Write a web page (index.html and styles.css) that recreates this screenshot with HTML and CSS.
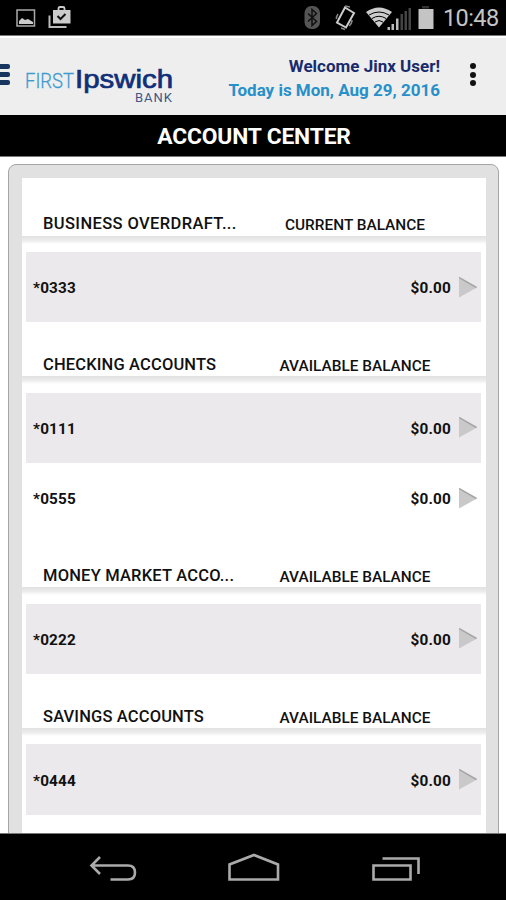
FILE: index.html
```
<!DOCTYPE html>
<html lang="en">
<head>
    <meta charset="UTF-8">
    <title>Account Center</title>
    <link rel="stylesheet" href="styles.css">
</head>
<body>
<div class="screen">
    <div class="status">
        <svg width="90" height="35">
            <path d="M17 10h17.500v16h-17.500z" fill="none" stroke="#aaa" stroke-width="1.500"/>
            <path d="M19 24v-3l3-3 3 2 3-1 5 3v2z" fill="#ccc"/>
            <path d="M49.500 15.500v11.500h17" fill="none" stroke="#bbb" stroke-width="2"/>
            <path d="M53 10h17.500v13.500h-17.500z" fill="#ccc"/>
            <path d="M58.500 10v-1.500q0-1.500 1.500-1.500h3q1.500 0 1.500 1.500v1.500" fill="none" stroke="#ccc" stroke-width="1.800"/>
            <path d="M57.500 16l3 3 5-5" fill="none" stroke="#111" stroke-width="2"/>
        </svg>
        <svg class="signals" width="136" height="35">
            <rect x="4.500" y="6" width="15.500" height="23" rx="7" fill="#555"/>
            <path d="M8 13.500l8.500 8-4.500 4v-16l4.500 4-8.500 8" fill="none" stroke="#111" stroke-width="1.500"/>
            <path d="M45 7.500l9 5.500-8 14.500-9-5z" fill="none" stroke="#ccc" stroke-width="2"/>
            <path d="M38 14q-2 3-1.500 5M41 28l4 1.500M49 26q3-2 3-6M45 6l5 1" fill="none" stroke="#888" stroke-width="1.500"/>
            <path d="M66 12q13-9 26 0l-13 15.500z" fill="#ccc"/>
            <path d="M69 15q10-6 20 0M72 18.500q7-4.500 14 0M75 22q4-3 8 0" fill="none" stroke="#000" stroke-width="1"/>
            <path d="M87.500 30v-3h2.500v3zM91.500 30v-6h2.500v6zM96 30v-11.500h2.500v11.500z" fill="#bbb"/>
            <path d="M100.500 30v-16h2.500v16zM104.500 30v-19h2.500v19zM108.500 30v-22h2.500v22z" fill="#444"/>
            <path d="M118.500 9h15v20h-15z" fill="#c4c4c4"/>
            <path d="M122 6h7v2.500h-7z" fill="#333"/>
        </svg>
        <span class="clock">10:48</span>
    </div>

    <div class="top">
        <div class="menu"><i></i><i></i><i></i></div>
        <svg class="logo" width="150" height="60">
            <text class="first" x="0" y="37.500" textLength="49" lengthAdjust="spacingAndGlyphs">FIRST</text>
            <text class="ipswich" x="50" y="37.500" textLength="98" lengthAdjust="spacingAndGlyphs">Ipswich</text>
            <text class="bank" x="110" y="52" textLength="37">BANK</text>
        </svg>
        <div class="welcome">
            <p class="user">Welcome Jinx User!</p>
            <p class="today">Today is Mon, Aug 29, 2016</p>
        </div>
        <div class="dots"><i></i><i></i><i></i></div>
    </div>

    <h1>ACCOUNT CENTER</h1>

    <div class="content">
        <div class="panel">
            <div class="list">
                <div class="head first-head"><span class="name">BUSINESS OVERDRAFT...</span><span class="balance">CURRENT BALANCE</span></div>
                <div class="row gray"><span>*0333</span><span class="money">$0.00</span><svg class="arrow" width="18" height="21"><path d="M0 0l18 10.500-18 10z"/><path class="edge" d="M0 .5l17.500 10"/></svg></div>
                <div class="head"><span class="name">CHECKING ACCOUNTS</span><span class="balance">AVAILABLE BALANCE</span></div>
                <div class="row gray"><span>*0111</span><span class="money">$0.00</span><svg class="arrow" width="18" height="21"><path d="M0 0l18 10.500-18 10z"/><path class="edge" d="M0 .5l17.500 10"/></svg></div>
                <div class="row"><span>*0555</span><span class="money">$0.00</span><svg class="arrow" width="18" height="21"><path d="M0 0l18 10.500-18 10z"/><path class="edge" d="M0 .5l17.500 10"/></svg></div>
                <div class="head"><span class="name money-market">MONEY MARKET ACCO...</span><span class="balance">AVAILABLE BALANCE</span></div>
                <div class="row gray"><span>*0222</span><span class="money">$0.00</span><svg class="arrow" width="18" height="21"><path d="M0 0l18 10.500-18 10z"/><path class="edge" d="M0 .5l17.500 10"/></svg></div>
                <div class="head"><span class="name">SAVINGS ACCOUNTS</span><span class="balance">AVAILABLE BALANCE</span></div>
                <div class="row gray"><span>*0444</span><span class="money">$0.00</span><svg class="arrow" width="18" height="21"><path d="M0 0l18 10.500-18 10z"/><path class="edge" d="M0 .5l17.500 10"/></svg></div>
            </div>
        </div>
    </div>

    <div class="nav">
        <svg width="506" height="67" fill="none" stroke="#aaa" stroke-width="2.600">
            <path d="M100 23l-8.500 8.500 8.500 8.500M92 31.500h36q7 0 7 7t-7 7h-17.500"/>
            <path d="M229.500 45.500v-15l24.500-9.500 24 9.500v15z"/>
            <path d="M373.500 31.500h37v14h-37zM382.500 24.500h36v15.500"/>
        </svg>
    </div>
</div>
</body>
</html>
```
FILE: styles.css
```
*{
    margin: 0;
    padding: 0;
    box-sizing: border-box;
}
body{
    font-family: Roboto, "Liberation Sans", sans-serif;
    background: #fff;
    color: #111;
}
svg{
    display: block;
}
.screen{
    width: 506px;
    height: 900px;
    overflow: hidden;
    display: flex;
    flex-direction: column;
}
.status{
    height: 36px;
    flex: none;
    display: flex;
    background: #000;
    border-bottom: 1px solid #777;
}
.signals{
    margin-left: 210px;
}
.clock{
    margin-left: 7px;
    color: #c4c4c4;
    font-size: 23.5px;
    line-height: 37px;
    letter-spacing: -.6px;
}
.top{
    height: 79px;
    flex: none;
    display: flex;
    background: #eee;
    border-top: 2px solid #fff;
}
.menu{
    width: 10px;
    padding-top: 26px;
}
.menu i{
    display: block;
    height: 5px;
    margin-bottom: 3px;
    background: #17365f;
    border-radius: 0 2px 2px 0;
}
.logo{
    margin: 12px 0 0 15px;
}
.first{
    font: 300 20.5px Roboto, sans-serif;
    fill: #3d9bd0;
    stroke: #3d9bd0;
    stroke-width: .3px;
}
.ipswich{
    font: 500 25px "Liberation Sans", sans-serif;
    fill: #102f78;
    stroke: #102f78;
    stroke-width: .7px;
}
.bank{
    font: 13px Roboto, sans-serif;
    fill: #3d5688;
}
.welcome{
    width: 265px;
    padding-top: 17px;
    text-align: right;
    font-weight: 700;
    font-size: 17px;
    line-height: 23.5px;
    white-space: nowrap;
}
.user{
    color: #182b6c;
}
.today{
    color: #2790ca;
}
.dots{
    margin: 25px 0 0 30px;
}
.dots i{
    display: block;
    width: 6px;
    height: 6px;
    margin-bottom: 2.5px;
    border-radius: 50%;
    background: #111;
}
h1{
    height: 42px;
    flex: none;
    padding-left: 2px;
    background: #000;
    border-bottom: 1px solid #777;
    color: #fff;
    font-size: 22.8px;
    font-weight: 700;
    letter-spacing: -.15px;
    line-height: 43px;
    text-align: center;
}
.content{
    flex: 1;
    min-height: 0;
    padding: 7px 7px 0 8px;
    overflow: hidden;
}
.panel{
    height: 700px;
    padding: 13px 12px 0 13px;
    background: #e1e1e1;
    border: 1px solid #a5a5a5;
    border-radius: 8px;
}
.list{
    height: 687px;
    background: #fff;
}
.head{
    height: 70.35px;
    padding: 33px 0 0 21px;
    display: flex;
    font-size: 16.5px;
    font-weight: 500;
    line-height: 20px;
    white-space: nowrap;
    background: linear-gradient(#e1e1e1, #ececec 55%, #fff) 0 54px / 100% 8px no-repeat;
}
.first-head{
    height: 74px;
    padding-top: 36px;
    background-position: 0 58px;
}
.name{
    width: 214px;
    letter-spacing: .15px;
}
.first-head .name{
    letter-spacing: .38px;
}
.money-market{
    letter-spacing: .2px;
}
.balance{
    width: 196px;
    text-align: center;
    font-size: 15.4px;
    line-height: 22px;
}
.row{
    height: 70.35px;
    margin: 0 5px 0 4px;
    padding: 0 4px 0 7px;
    display: flex;
    align-items: center;
    font-size: 15.3px;
    font-weight: 700;
    letter-spacing: .2px;
}
.gray{
    background: #ebe9eb;
}
.row span{
    padding-top: 2px;
}
.money{
    margin-left: auto;
}
.arrow{
    margin-left: 8px;
    fill: #c9c9c9;
}
.edge{
    stroke: #a5a5a5;
    stroke-width: 1.5px;
}
.nav{
    height: 67px;
    flex: none;
    background: #000;
    border-top: 1px solid #777;
}
```
